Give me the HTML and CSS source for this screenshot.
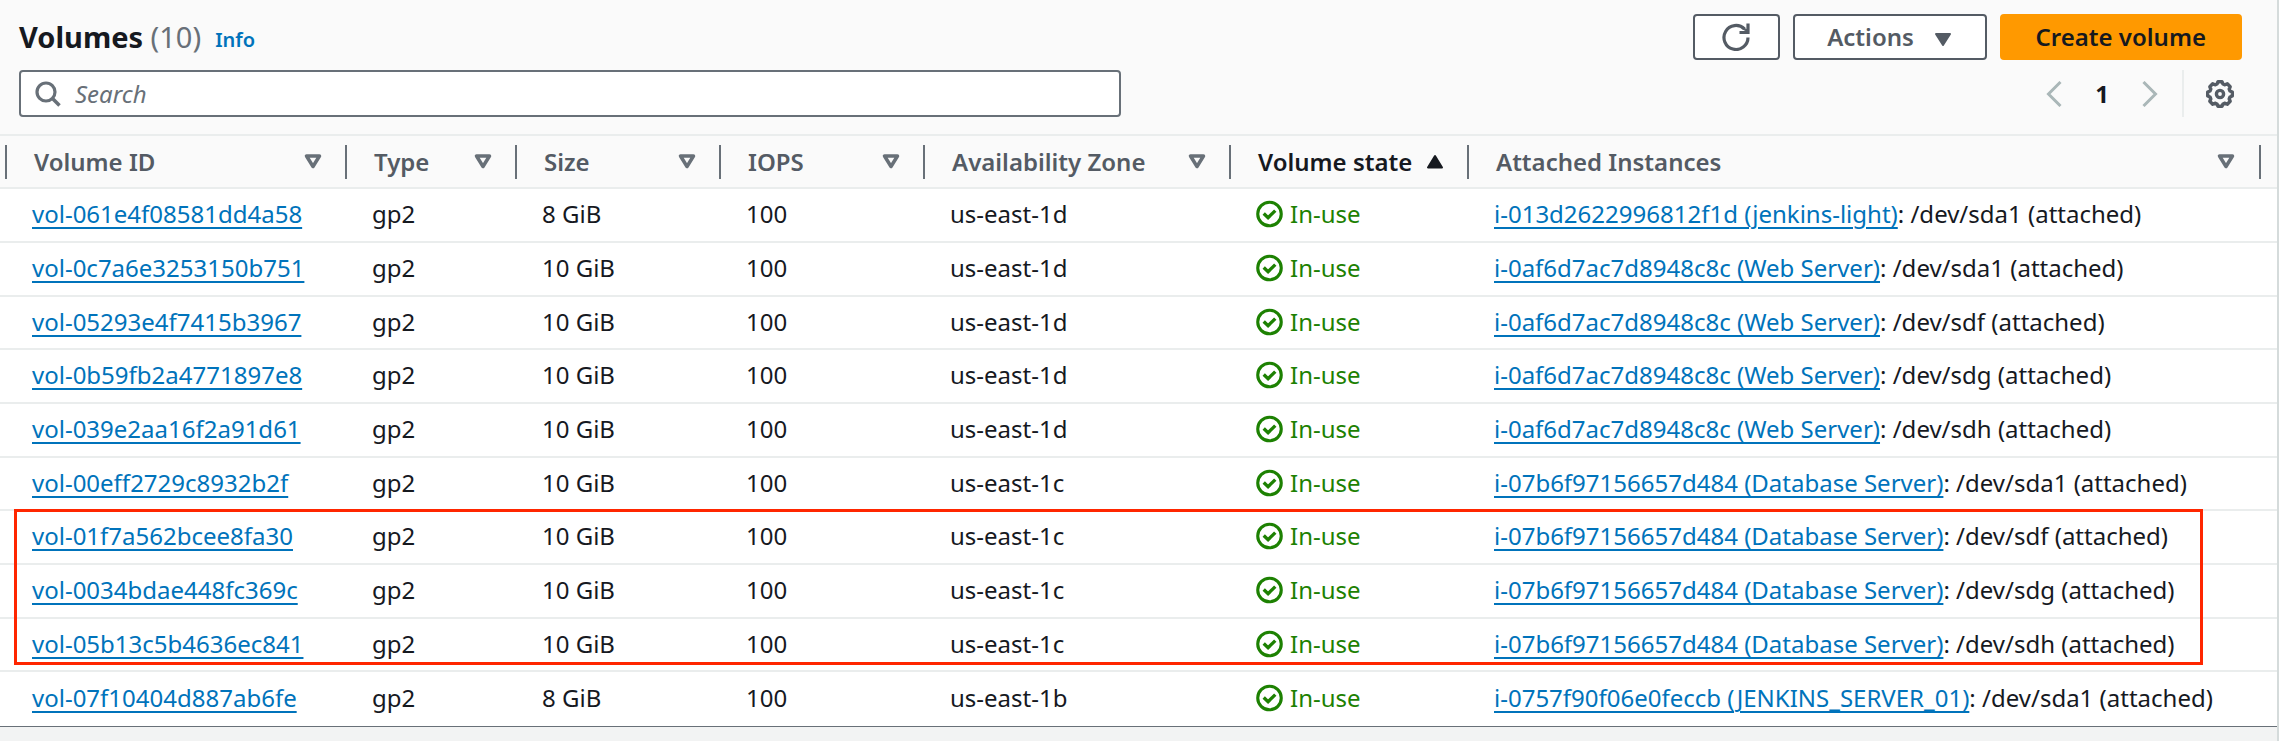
FILE: index.html
```html
<!DOCTYPE html>
<html lang="en">
<head>
<meta charset="utf-8">
<title>Volumes</title>
<link rel="stylesheet" href="styles.css">
</head>
<body>
<svg class="defs" aria-hidden="true">
  <symbol id="sort" viewBox="0 0 18 15"><path d="M2.5 2h13L9 12.5z" fill="none" stroke="currentColor" stroke-width="3.500" stroke-linejoin="round"/></symbol>
  <symbol id="sorted" viewBox="0 0 18 15"><path d="M2 13.5h14L9 2z" fill="currentColor" stroke="currentColor" stroke-width="2" stroke-linejoin="round"/></symbol>
  <symbol id="ok" viewBox="0 0 28 28"><circle cx="14" cy="14" r="12.2" fill="none" stroke="currentColor" stroke-width="3.200"/><path d="M8 13.5l4.5 4.3 7.5-7.300" fill="none" stroke="currentColor" stroke-width="3.500"/></symbol>
</svg>
<main class="panel">
  <header class="head">
    <div class="row">
      <h1 class="title">Volumes <span class="count">(10)</span></h1>
      <a class="info" href="#">Info</a>
      <div class="actions">
        <button class="btn btn-icon" type="button" aria-label="Refresh"><svg class="refresh" viewBox="0 0 28 28"><path d="M26 14.5A12 12 0 1 1 22.500 6" fill="none" stroke="currentColor" stroke-width="3.200"/><path d="M26 .5v9H17.500" fill="none" stroke="currentColor" stroke-width="3.200"/><path d="M20 4.500l6 6V7z" fill="currentColor" stroke="currentColor"/></svg></button>
        <button class="btn btn-menu" type="button">Actions <svg class="caret" viewBox="0 0 18 15"><path d="M2 2h14L9 13z" fill="currentColor" stroke="currentColor" stroke-width="2" stroke-linejoin="round"/></svg></button>
        <button class="btn btn-primary" type="button">Create volume</button>
      </div>
    </div>
    <div class="row">
      <label class="search">
        <svg class="lens" viewBox="0 0 26 26"><circle cx="11" cy="11" r="9" fill="none" stroke="currentColor" stroke-width="3.200"/><path d="M17.5 17.5l7 7" stroke="currentColor" stroke-width="3.500"/></svg>
        <input type="search" placeholder="Search" aria-label="Search">
      </label>
      <nav class="pager">
        <button class="plain off" type="button" aria-label="Previous page"><svg class="chev" viewBox="0 0 16 26"><path d="M14.500 1L2.500 13l12 12" fill="none" stroke="currentColor" stroke-width="3"/></svg></button>
        <button class="plain page" type="button">1</button>
        <button class="plain off" type="button" aria-label="Next page"><svg class="chev" viewBox="0 0 16 26"><path d="M1.500 1l12 12-12 12" fill="none" stroke="currentColor" stroke-width="3"/></svg></button>
        <button class="plain gear" type="button" aria-label="Preferences"><svg class="cog" viewBox="0 0 28 28"><path d="M11 4l1-2.300h4l1 2.300 2 .8 2.300-1 2.900 2.900-1 2.300.8 2 2.300 1v4l-2.300 1-.8 2 1 2.300-2.900 2.900-2.300-1-2 .8-1 2.300h-4l-1-2.300-2-.8-2.300 1-2.900-2.900 1-2.300-.8-2-2.300-1v-4l2.300-1 .8-2-1-2.300 2.900-2.900 2.300 1z" fill="none" stroke="currentColor" stroke-width="3.400" stroke-linejoin="round"/><circle cx="14" cy="14" r="3.600" fill="none" stroke="currentColor" stroke-width="3.400"/></svg></button>
      </nav>
    </div>
  </header>
  <div class="grid">
    <table>
      <colgroup><col class="c-id"><col class="c-type"><col class="c-num"><col class="c-num"><col class="c-zone"><col class="c-state"><col></colgroup>
      <thead><tr>
        <th><div>Volume ID <svg><use href="#sort"/></svg></div></th>
        <th><div>Type <svg><use href="#sort"/></svg></div></th>
        <th><div>Size <svg><use href="#sort"/></svg></div></th>
        <th><div>IOPS <svg><use href="#sort"/></svg></div></th>
        <th><div>Availability Zone <svg><use href="#sort"/></svg></div></th>
        <th class="active" aria-sort="ascending"><div>Volume state <svg><use href="#sorted"/></svg></div></th>
        <th><div>Attached Instances <svg><use href="#sort"/></svg></div></th>
      </tr></thead>
      <tbody>
        <tr><td><a href="#">vol-061e4f08581dd4a58</a></td><td>gp2</td><td>8 GiB</td><td>100</td><td>us-east-1d</td><td><span class="ok"><svg><use href="#ok"/></svg>In-use</span></td><td><a href="#">i-013d2622996812f1d (jenkins-light)</a>: /dev/sda1 (attached)</td></tr>
        <tr><td><a href="#">vol-0c7a6e3253150b751</a></td><td>gp2</td><td>10 GiB</td><td>100</td><td>us-east-1d</td><td><span class="ok"><svg><use href="#ok"/></svg>In-use</span></td><td><a href="#">i-0af6d7ac7d8948c8c (Web Server)</a>: /dev/sda1 (attached)</td></tr>
        <tr><td><a href="#">vol-05293e4f7415b3967</a></td><td>gp2</td><td>10 GiB</td><td>100</td><td>us-east-1d</td><td><span class="ok"><svg><use href="#ok"/></svg>In-use</span></td><td><a href="#">i-0af6d7ac7d8948c8c (Web Server)</a>: /dev/sdf (attached)</td></tr>
        <tr><td><a href="#">vol-0b59fb2a4771897e8</a></td><td>gp2</td><td>10 GiB</td><td>100</td><td>us-east-1d</td><td><span class="ok"><svg><use href="#ok"/></svg>In-use</span></td><td><a href="#">i-0af6d7ac7d8948c8c (Web Server)</a>: /dev/sdg (attached)</td></tr>
        <tr><td><a href="#">vol-039e2aa16f2a91d61</a></td><td>gp2</td><td>10 GiB</td><td>100</td><td>us-east-1d</td><td><span class="ok"><svg><use href="#ok"/></svg>In-use</span></td><td><a href="#">i-0af6d7ac7d8948c8c (Web Server)</a>: /dev/sdh (attached)</td></tr>
        <tr><td><a href="#">vol-00eff2729c8932b2f</a></td><td>gp2</td><td>10 GiB</td><td>100</td><td>us-east-1c</td><td><span class="ok"><svg><use href="#ok"/></svg>In-use</span></td><td><a href="#">i-07b6f97156657d484 (Database Server)</a>: /dev/sda1 (attached)</td></tr>
        <tr><td><a href="#">vol-01f7a562bcee8fa30</a></td><td>gp2</td><td>10 GiB</td><td>100</td><td>us-east-1c</td><td><span class="ok"><svg><use href="#ok"/></svg>In-use</span></td><td><a href="#">i-07b6f97156657d484 (Database Server)</a>: /dev/sdf (attached)</td></tr>
        <tr><td><a href="#">vol-0034bdae448fc369c</a></td><td>gp2</td><td>10 GiB</td><td>100</td><td>us-east-1c</td><td><span class="ok"><svg><use href="#ok"/></svg>In-use</span></td><td><a href="#">i-07b6f97156657d484 (Database Server)</a>: /dev/sdg (attached)</td></tr>
        <tr><td><a href="#">vol-05b13c5b4636ec841</a></td><td>gp2</td><td>10 GiB</td><td>100</td><td>us-east-1c</td><td><span class="ok"><svg><use href="#ok"/></svg>In-use</span></td><td><a href="#">i-07b6f97156657d484 (Database Server)</a>: /dev/sdh (attached)</td></tr>
        <tr><td><a href="#">vol-07f10404d887ab6fe</a></td><td>gp2</td><td>8 GiB</td><td>100</td><td>us-east-1b</td><td><span class="ok"><svg><use href="#ok"/></svg>In-use</span></td><td><a href="#">i-0757f90f06e0feccb (JENKINS_SERVER_01)</a>: /dev/sda1 (attached)</td></tr>
      </tbody>
    </table>
    <div class="marker"></div>
  </div>
</main>
</body>
</html>
```
FILE: styles.css
```css
* { box-sizing: border-box; }
body {
  margin: 0;
  min-height: 100vh;
  background: #f2f3f3;
  color: #16191f;
  font: 24px/32px "Noto Sans", "Open Sans", sans-serif;
  border-right: 2px solid #d5dbdb;
}
button, input { font: inherit; color: inherit; }
.defs { position: absolute; width: 0; height: 0; }
.panel { background: #fff; border-bottom: 1px solid #687078; }
.head {
  display: flex;
  flex-direction: column;
  gap: 10px;
  padding: 14px 35px 17px 19px;
  background: #fafafa;
}
.row { display: flex; align-items: center; }
.title { margin: 0; font-size: 29px; font-weight: 700; }
.count { font-weight: 400; color: #687078; }
.info { margin: 5px 0 0 14px; font-size: 20px; font-weight: 600; color: #0073bb; text-decoration: none; }
.actions { display: flex; gap: 13px; margin-left: auto; }
.btn {
  display: flex;
  align-items: center;
  justify-content: center;
  height: 46px;
  padding: 0 34px;
  border: 2px solid #545b64;
  border-radius: 4px;
  background: #fff;
  color: #545b64;
  font-weight: 600;
}
.btn-icon { width: 87px; padding: 0; }
.btn-menu { gap: 20px; min-width: 194px; padding: 0 32px; }
.btn-primary { min-width: 242px; border-color: #ff9900; background: #ff9900; color: #16191f; }
.refresh { width: 28px; height: 28px; }
.caret { width: 18px; height: 15px; margin-top: 4px; }
.search {
  display: flex;
  align-items: center;
  gap: 14px;
  width: 1102px;
  max-width: 60%;
  height: 47px;
  padding: 0 14px;
  border: 2px solid #687078;
  border-radius: 4px;
  background: #fff;
  color: #687078;
}
.lens { width: 26px; height: 26px; flex: none; }
.search input { flex: 1; min-width: 0; border: 0; padding: 0; background: none; outline: none; }
.search input::placeholder { color: #687078; font-style: italic; opacity: 1; }
.pager { display: flex; align-items: center; margin-left: auto; height: 47px; }
.plain { display: flex; align-items: center; justify-content: center; width: 48px; height: 47px; padding: 0; border: 0; background: none; }
.off { color: #aab7b8; }
.page { font-weight: 700; }
.chev { width: 16px; height: 26px; }
.gear { width: 60px; margin-left: 8px; padding-left: 14px; border-left: 2px solid #eaeded; color: #545b64; }
.cog { width: 28px; height: 28px; }

.grid { position: relative; border-top: 2px solid #eaeded; }
table { width: 100%; table-layout: fixed; border-collapse: separate; border-spacing: 0; }
.c-id { width: 347px; }
.c-type { width: 170px; }
.c-num { width: 204px; }
.c-zone { width: 306px; }
.c-state { width: 238px; }
th {
  position: relative;
  height: 53px;
  padding: 0 25px 0 27px;
  background: #fafafa;
  border-bottom: 2px solid #eaeded;
  color: #545b64;
  font-weight: 600;
  text-align: left;
}
th div { display: flex; align-items: center; justify-content: space-between; }
th svg { width: 18px; height: 15px; color: #687078; }
th::after, th:first-child::before {
  content: "";
  position: absolute;
  top: 9px;
  right: 0;
  width: 2px;
  height: 34px;
  background: #687078;
}
th:first-child::before { left: 5px; }
th:last-child { padding-right: 42px; }
th:last-child::after { right: 16px; }
th.active, th.active svg { color: #16191f; }
td { height: 54px; padding: 0 0 2px 25px; border-bottom: 2px solid #eaeded; white-space: nowrap; }
tr:nth-child(3n) td { height: 53px; }
tr:last-child td { border-bottom: 0; }
th:first-child { padding-left: 34px; }
td:first-child { padding-left: 32px; }
td a { color: #0073bb; text-decoration: underline; text-decoration-thickness: 2px; text-underline-offset: 4px; }
.ok { display: flex; align-items: center; gap: 7px; color: #1d8102; }
.ok svg { width: 27px; height: 28px; }
.marker { position: absolute; top: 373px; left: 14px; right: 74px; height: 156px; border: 3px solid #ff2600; pointer-events: none; }
```
